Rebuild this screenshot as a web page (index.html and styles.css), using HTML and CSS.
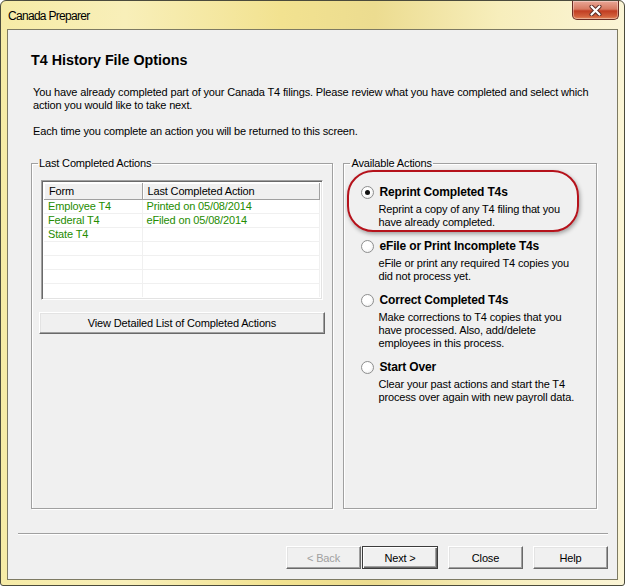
FILE: index.html
```html
<!DOCTYPE html>
<html lang="en">
<head>
  <meta charset="UTF-8" />
  <title>Canada Preparer</title>
  <link rel="stylesheet" href="styles.css">
</head>
<body>
  <!-- Wizard Window -->
  <div class="window">
    <div class="titlebar">
      <span class="title">Canada Preparer</span>
      <button class="close-btn" aria-label="Close">
        <svg width="17" height="11" viewBox="0 0 17 11">
          <path d="M4.5 1.5 L12.5 9.5 M12.5 1.5 L4.5 9.5" stroke="#5a2a22" stroke-width="4" stroke-linecap="round"/>
          <path d="M4.5 1.5 L12.5 9.5 M12.5 1.5 L4.5 9.5" stroke="#fff" stroke-width="2.2" stroke-linecap="round"/>
        </svg>
      </button>
    </div>

    <div class="client">
      <div class="content">
        <h1>T4 History File Options</h1>
        <p class="intro">You have already completed part of your Canada T4 filings. Please review what you have completed and select which<br>action you would like to take next.</p>
        <p class="intro second">Each time you complete an action you will be returned to this screen.</p>

        <div class="groups">
          <fieldset class="group group-history">
            <legend>Last Completed Actions</legend>
            <div class="listview">
              <table>
                <thead>
                  <tr><th class="col-form">Form</th><th>Last Completed Action</th></tr>
                </thead>
                <tbody>
                  <tr><td>Employee T4</td><td>Printed on 05/08/2014</td></tr>
                  <tr><td>Federal T4</td><td>eFiled on 05/08/2014</td></tr>
                  <tr><td>State T4</td><td></td></tr>
                  <tr><td></td><td></td></tr>
                  <tr><td></td><td></td></tr>
                  <tr><td></td><td></td></tr>
                  <tr><td></td><td></td></tr>
                </tbody>
              </table>
            </div>
            <button class="btn btn-wide">View Detailed List of Completed Actions</button>
          </fieldset>

          <fieldset class="group group-actions">
            <legend>Available Actions</legend>

            <div class="option highlighted">
              <span class="radio checked"></span>
              <label>Reprint Completed T4s</label>
              <p class="desc">Reprint a copy of any T4 filing that you<br>have already completed.</p>
              <div class="callout"></div>
            </div>

            <div class="option">
              <span class="radio"></span>
              <label>eFile or Print Incomplete T4s</label>
              <p class="desc">eFile or print any required T4 copies you<br>did not process yet.</p>
            </div>

            <div class="option">
              <span class="radio"></span>
              <label>Correct Completed T4s</label>
              <p class="desc">Make corrections to T4 copies that you<br>have processed. Also, add/delete<br>employees in this process.</p>
            </div>

            <div class="option">
              <span class="radio"></span>
              <label>Start Over</label>
              <p class="desc">Clear your past actions and start the T4<br>process over again with new payroll data.</p>
            </div>
          </fieldset>
        </div>
      </div>

      <div class="footer">
        <div class="separator"></div>
        <div class="buttons">
          <button class="btn" disabled>&lt; Back</button>
          <button class="btn btn-default">Next &gt;</button>
          <button class="btn btn-gap">Close</button>
          <button class="btn btn-gap">Help</button>
        </div>
      </div>
    </div>
  </div>
</body>
</html>
```

FILE: styles.css
```css
* {
  box-sizing: border-box;
}
body {
  margin: 0;
  background: #fff;
  font-family: 'Liberation Sans', Arial, sans-serif;
  font-size: 11px;
  letter-spacing: -0.15px;
  color: #000;
}
.window {
  width: 625px;
  height: 586px;
  border: 1px solid #4b4b3c;
  border-radius: 6px 6px 3px 3px;
  padding: 0 6px 5px 6px;
  background: linear-gradient(to right, #f6eba6 0%, #f8efb9 20%, #f2e290 45%, #ecdc90 60%, #f7eebc 80%, #fbf5d6 100%);
  display: flex;
  flex-direction: column;
}
.titlebar {
  height: 28px;
  display: flex;
  align-items: flex-start;
}
.title {
  font-size: 12px;
  letter-spacing: -0.7px;
  margin: 8px 0 0 1px;
  color: #000;
}
.close-btn {
  margin-left: auto;
  margin-right: -1px;
  width: 47px;
  height: 19px;
  padding: 0;
  border: 1px solid #6a2d24;
  border-top: none;
  border-radius: 0 0 5px 5px;
  background: linear-gradient(to bottom, #e9a796 0%, #d77a62 45%, #c13d22 55%, #d2603c 85%, #e48a5d 100%);
  box-shadow: inset 0 0 0 1px rgba(255,255,255,0.35);
  display: flex;
  justify-content: center;
  align-items: center;
}
.client {
  flex: 1;
  background: #f0f0f0;
  border: 1px solid #7d7a63;
  display: flex;
  flex-direction: column;
}
.content {
  padding: 21px 20px 0 23px;
}
h1 {
  margin: 0;
  font-size: 14.3px;
  line-height: 18px;
  font-weight: bold;
  letter-spacing: 0;
}
.intro {
  margin: 17px 0 0 2px;
  line-height: 13px;
  white-space: nowrap;
}
.intro.second {
  margin-top: 13px;
}
.groups {
  display: flex;
  gap: 10px;
  margin-top: 19px;
}
.group {
  margin: 0;
  padding: 0;
  min-width: 0;
  height: 352px;
  border: 1px solid #a0a0a0;
  box-shadow: inset 1px 1px 0 #fff, 1px 1px 0 #fff;
}
.group legend {
  margin-left: 6px;
  padding: 0 1px;
  line-height: 13px;
}
.group-history {
  width: 303px;
}
.group-actions {
  width: 254px;
}

/* list view */
.listview {
  margin: 10px 0 0 9px;
  width: 282px;
  height: 120px;
  background: #fff;
  border: 1px solid;
  border-color: #a0a0a0 #fff #fff #a0a0a0;
  box-shadow: inset 1px 1px 0 #696969, inset -1px -1px 0 #e3e3e3;
  padding: 2px 2px 0 2px;
  overflow: hidden;
}
.listview table {
  width: 100%;
  border-collapse: collapse;
  table-layout: fixed;
}
.listview th {
  height: 16px;
  padding: 0 0 0 5px;
  font-weight: normal;
  text-align: left;
  background: #f0f0f0;
  border-right: 1px solid #a0a0a0;
  border-bottom: 1px solid #a0a0a0;
  box-shadow: inset 1px 1px 0 #fff;
}
.listview th.col-form {
  width: 98px;
}
.listview td {
  height: 14px;
  padding: 0 0 0 4px;
  line-height: 13px;
  color: #258c00;
  border-top: 1px solid #f0f0f0;
  border-right: 1px solid #f0f0f0;
  white-space: nowrap;
}

/* buttons */
.btn {
  font-family: 'Liberation Sans', Arial, sans-serif;
  font-size: 11px;
  letter-spacing: -0.15px;
  color: #000;
  height: 23px;
  width: 75px;
  padding: 0;
  background: #f0f0f0;
  border: 1px solid;
  border-color: #fff #696969 #696969 #fff;
  box-shadow: inset -1px -1px 0 #a0a0a0, inset 1px 1px 0 #e3e3e3;
}
.btn:disabled {
  color: #a0a0a0;
}
.btn-default {
  width: 76px;
  margin-left: 1px;
  border: 1px solid #3c3c3c;
  box-shadow: inset 1px 1px 0 #fff, inset -1px -1px 0 #696969, inset -2px -2px 0 #a0a0a0;
}
.btn-gap {
  margin-left: 10px;
}
.btn-wide {
  display: block;
  width: 286px;
  height: 22px;
  margin: 12px 0 0 7px;
}

/* options */
.option {
  position: relative;
  display: grid;
  grid-template-columns: 13px auto;
  column-gap: 5px;
  margin: 0 0 10px 17px;
}
.option:first-of-type {
  margin-top: 15px;
}
.option label {
  font-size: 12px;
  font-weight: bold;
  line-height: 15px;
}
.radio {
  width: 13px;
  height: 13px;
  margin-top: 1px;
  border-radius: 50%;
  border: 1px solid #8e8f8f;
  background: radial-gradient(circle at 40% 40%, #fff 0%, #fff 40%, #e6e6e6 100%);
  position: relative;
}
.radio.checked::after {
  content: "";
  position: absolute;
  left: 3px;
  top: 3px;
  width: 5px;
  height: 5px;
  border-radius: 50%;
  background: #111;
}
.desc {
  grid-column: 2;
  margin: 3px 0 0 -1px;
  line-height: 13px;
  white-space: nowrap;
}
.callout {
  position: absolute;
  left: -14px;
  top: -15px;
  width: 232px;
  height: 62px;
  border: 2px solid #b5121b;
  border-radius: 26px;
  box-shadow: 1px 2px 4px rgba(0,0,0,0.35);
}

/* footer */
.footer {
  margin-top: auto;
  padding: 0 9px 10px 10px;
}
.separator {
  height: 2px;
  border-top: 1px solid #a0a0a0;
  border-bottom: 1px solid #fff;
}
.buttons {
  display: flex;
  justify-content: flex-end;
  margin-top: 11px;
}
```
